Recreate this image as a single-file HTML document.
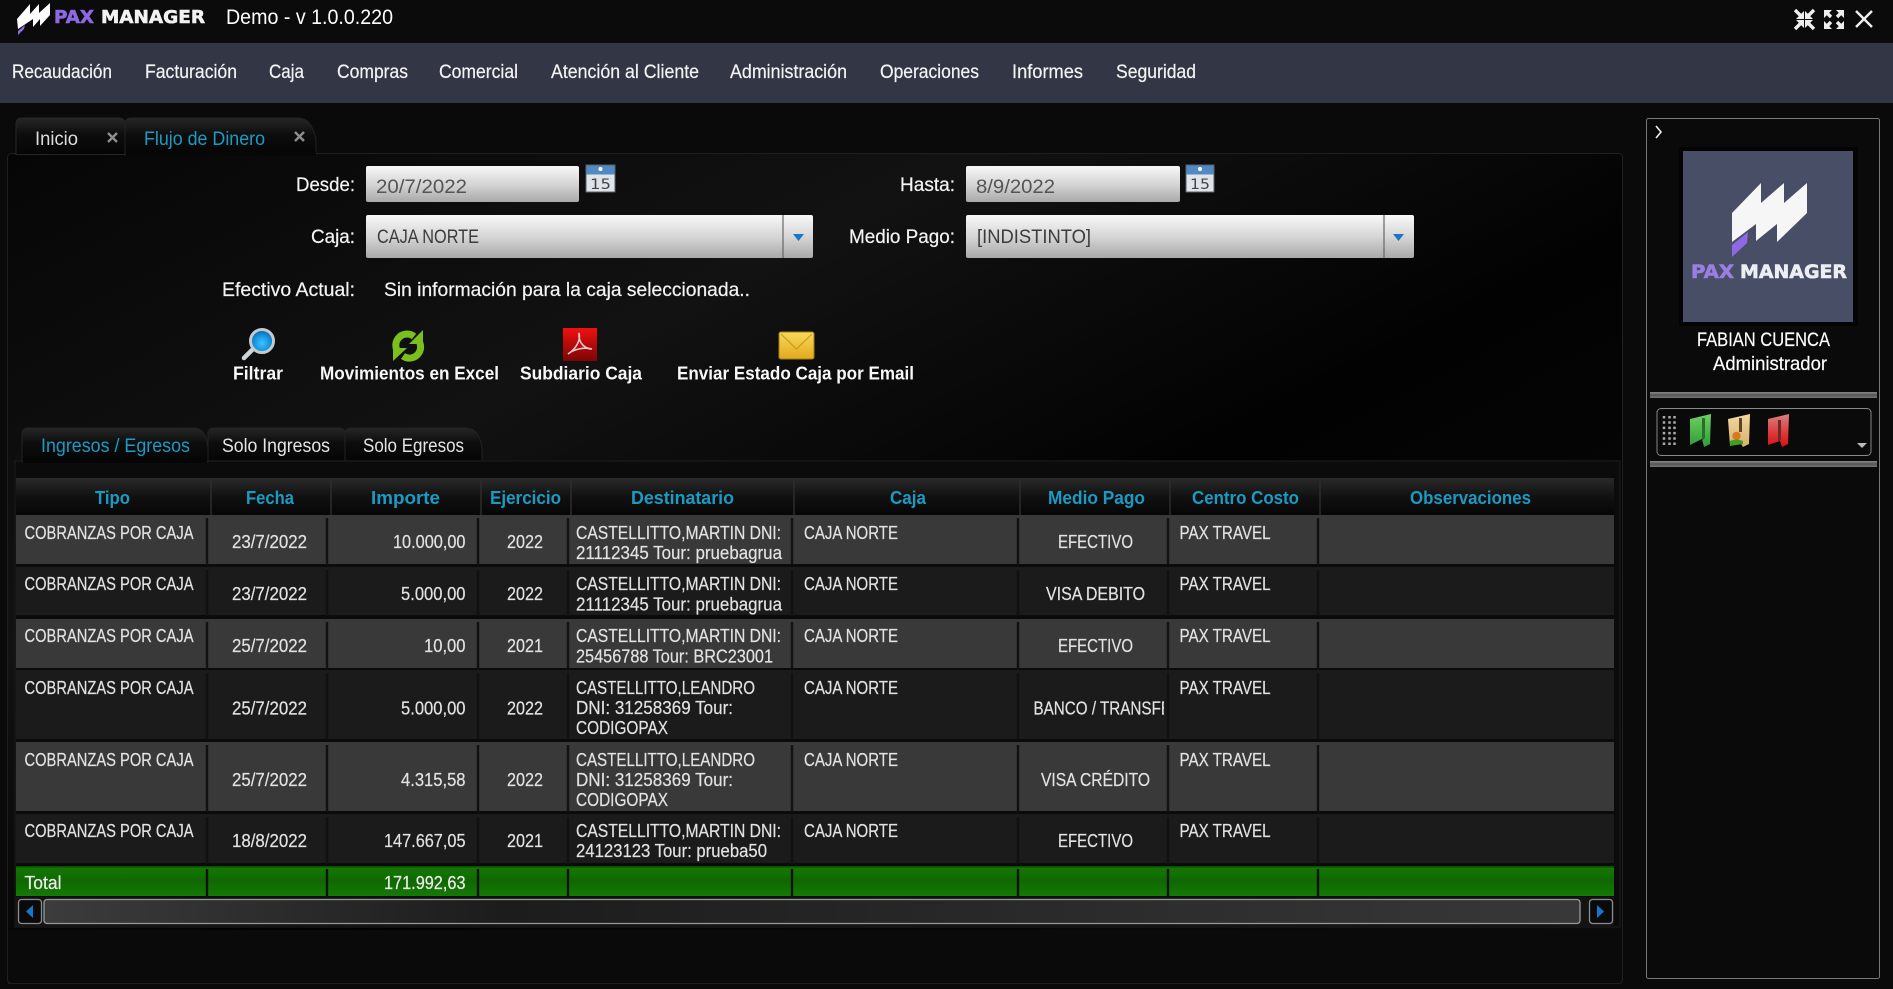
<!DOCTYPE html>
<html lang="es"><head><meta charset="utf-8"><title>Pax Manager</title>
<style>
html,body{margin:0;padding:0;width:1893px;height:989px;overflow:hidden;background:#0a0a0a}
svg.root{display:block;position:absolute;left:0;top:0;filter:blur(.35px)}
text{font-family:"Liberation Sans",sans-serif;font-size:19.5px;fill:#eee}
.m{fill:#f4f4f4;stroke:#f4f4f4;stroke-width:.2}
.d{font-size:18.5px;fill:#e2e2e2;stroke:#e2e2e2;stroke-width:.2;transform:translateY(.8px)}
.h{font-size:18px;font-weight:bold;fill:#1b9ac4;transform:translateY(.8px)}
.b{font-size:18px;font-weight:bold;fill:#f8f8f8}
.i{fill:#555}
.c{fill:#3c3c3c}
.a{fill:#1d9bc4}
.lg{font-family:"DejaVu Sans",sans-serif;font-weight:bold;stroke-width:.6}
</style></head><body>
<svg class="root" width="1893" height="989" viewBox="0 0 1893 989" xmlns="http://www.w3.org/2000/svg">
<defs>
<linearGradient id="inp" x1="0" y1="0" x2="0" y2="1"><stop offset="0" stop-color="#f8f8f8"/><stop offset=".5" stop-color="#d6d6d6"/><stop offset="1" stop-color="#a9a9a9"/></linearGradient>
<linearGradient id="hd" x1="0" y1="0" x2="0" y2="1"><stop offset="0" stop-color="#2a2a2a"/><stop offset=".5" stop-color="#111"/><stop offset="1" stop-color="#060606"/></linearGradient>
<linearGradient id="tab" x1="0" y1="0" x2="0" y2="1"><stop offset="0" stop-color="#262626"/><stop offset=".45" stop-color="#0d0d0d"/><stop offset="1" stop-color="#050505"/></linearGradient>
<linearGradient id="panel" x1="0" y1="0" x2="1" y2="1"><stop offset="0" stop-color="#060606"/><stop offset=".3" stop-color="#121212"/><stop offset=".55" stop-color="#020202"/><stop offset="1" stop-color="#0c0c0c"/></linearGradient>
<linearGradient id="tot" x1="0" y1="0" x2="0" y2="1"><stop offset="0" stop-color="#147a04"/><stop offset=".5" stop-color="#106802"/><stop offset="1" stop-color="#147a04"/></linearGradient>
<linearGradient id="thumb" x1="0" y1="0" x2="1" y2="0"><stop offset="0" stop-color="#3c3c3c"/><stop offset=".3" stop-color="#1c1c1c"/><stop offset="1" stop-color="#383838"/></linearGradient>
<linearGradient id="sep" x1="0" y1="0" x2="0" y2="1"><stop offset="0" stop-color="#8a8a8a"/><stop offset=".5" stop-color="#555"/><stop offset="1" stop-color="#777"/></linearGradient>
<radialGradient id="lens" cx=".5" cy=".6" r=".6"><stop offset="0" stop-color="#3fc4ff"/><stop offset=".6" stop-color="#1590dd"/><stop offset="1" stop-color="#0a5fa8"/></radialGradient>
<linearGradient id="pdf" x1="0" y1="0" x2="0" y2="1"><stop offset="0" stop-color="#f01010"/><stop offset="1" stop-color="#7c0505"/></linearGradient>
<linearGradient id="mail" x1="0" y1="0" x2="0" y2="1"><stop offset="0" stop-color="#f7da5c"/><stop offset="1" stop-color="#e2a91e"/></linearGradient>
<linearGradient id="fg" x1="0" y1="0" x2="0" y2="1"><stop offset="0" stop-color="#6fd064"/><stop offset="1" stop-color="#2e9c36"/></linearGradient>
<linearGradient id="ft" x1="0" y1="0" x2="0" y2="1"><stop offset="0" stop-color="#f0d9a0"/><stop offset="1" stop-color="#d8b06a"/></linearGradient>
<linearGradient id="fr" x1="0" y1="0" x2="0" y2="1"><stop offset="0" stop-color="#d98080"/><stop offset=".55" stop-color="#dd3c3c"/><stop offset="1" stop-color="#d80f0f"/></linearGradient>
</defs>

<!-- backgrounds -->
<rect width="1893" height="989" fill="#0a0a0a"/>
<rect width="1893" height="43" fill="#0b0b0b"/>
<rect y="43" width="1893" height="60" fill="#333645"/>

<!-- top logo -->
<path d="M17 19 L30 4 L30 14 L39 4 L39 13 L50 3 L50 15 L40 26 L40 19 L33 27 L33 19 L18 29 Z" fill="#fff"/>
<path d="M18 31 L25 25 L24 29 L18 35 Z" fill="#8d69e4"/>
<text class="lg" x="54" y="23" textLength="40" lengthAdjust="spacingAndGlyphs" style="font-size:18px;fill:#8d69e4;stroke:#8d69e4">PAX</text>
<text class="lg" x="101" y="23" textLength="104" lengthAdjust="spacingAndGlyphs" style="font-size:18px;fill:#f2f2f2;stroke:#f2f2f2">MANAGER</text>
<text x="226" y="24" textLength="167" lengthAdjust="spacingAndGlyphs" style="font-size:21.500px;fill:#fff">Demo - v 1.0.0.220</text>

<!-- window icons -->
<g stroke="#eee" stroke-width="3.400" fill="none">
<path d="M1795 10 L1802 17 M1814 10 L1807 17 M1795 29 L1802 22 M1814 29 L1807 22"/>
<path d="M1825 11 L1831 17 M1843 11 L1837 17 M1825 28 L1831 22 M1843 28 L1837 22"/>
<path d="M1856 11 L1872 27 M1872 11 L1856 27" stroke-width="2.400"/>
</g>
<g fill="#eee">
<path d="M1796 19 L1804 19 L1804 11 Z M1813 19 L1805 19 L1805 11 Z M1796 20 L1804 20 L1804 28 Z M1813 20 L1805 20 L1805 28 Z"/>
<path d="M1824 10 L1832 10 L1824 18 Z M1844 10 L1836 10 L1844 18 Z M1824 29 L1832 29 L1824 21 Z M1844 29 L1836 29 L1844 21 Z"/>
</g>

<!-- menu -->
<g>
<text class="m" x="12" y="78" textLength="100" lengthAdjust="spacingAndGlyphs">Recaudación</text>
<text class="m" x="145" y="78" textLength="92" lengthAdjust="spacingAndGlyphs">Facturación</text>
<text class="m" x="269" y="78" textLength="35" lengthAdjust="spacingAndGlyphs">Caja</text>
<text class="m" x="337" y="78" textLength="71" lengthAdjust="spacingAndGlyphs">Compras</text>
<text class="m" x="439" y="78" textLength="79" lengthAdjust="spacingAndGlyphs">Comercial</text>
<text class="m" x="551" y="78" textLength="148" lengthAdjust="spacingAndGlyphs">Atención al Cliente</text>
<text class="m" x="730" y="78" textLength="117" lengthAdjust="spacingAndGlyphs">Administración</text>
<text class="m" x="880" y="78" textLength="99" lengthAdjust="spacingAndGlyphs">Operaciones</text>
<text class="m" x="1012" y="78" textLength="71" lengthAdjust="spacingAndGlyphs">Informes</text>
<text class="m" x="1116" y="78" textLength="80" lengthAdjust="spacingAndGlyphs">Seguridad</text>
</g>

<!-- main panel -->
<rect x="7.500" y="153.500" width="1615" height="830" rx="4" fill="url(#panel)" stroke="#1f1f1f"/>
<rect x="8" y="930" width="1614" height="53" fill="#0a0a0a"/>
<path d="M8 983.500 H1618 Q1622.500 983.500 1622.500 979 V930" fill="none" stroke="#1f1f1f"/>
<path d="M7.500 930 V979 Q7.500 983.500 12 983.500" fill="none" stroke="#1f1f1f"/>

<!-- tabs -->
<path d="M16 154.500 V124 Q16 118 22 118 H118 Q125 118 125 124 V154.500 Z" fill="url(#tab)" stroke="#262626"/>
<path d="M125 155 V124 Q125 118 131 118 H298 Q312 118 316 140 V155 Z" fill="url(#tab)" stroke="#222"/>
<rect x="126" y="152" width="190" height="4" fill="#070707"/>
<text x="35" y="145" textLength="43" lengthAdjust="spacingAndGlyphs" style="fill:#ddd">Inicio</text>
<text class="a" x="144" y="145" textLength="121" lengthAdjust="spacingAndGlyphs">Flujo de Dinero</text>
<path d="M108 133 L117 142 M117 133 L108 142 M295 132 L304 141 M304 132 L295 141" stroke="#8e8e8e" stroke-width="2.400" fill="none"/>

<!-- form -->
<rect x="366" y="166" width="213" height="36" rx="2" fill="url(#inp)"/>
<rect x="966" y="166" width="214" height="36" rx="2" fill="url(#inp)"/>
<rect x="366" y="215" width="447" height="43" rx="2" fill="url(#inp)"/>
<rect x="966" y="215" width="448" height="43" rx="2" fill="url(#inp)"/>
<path d="M783 215 V258 M1384 215 V258" stroke="#666" stroke-width="1.200"/>
<path d="M793 234 H804 L798.500 241 Z M1393 234 H1404 L1398.500 241 Z" fill="#1976c8"/>

<g>
<rect x="586" y="165" width="29" height="27" fill="#dfe4ea" stroke="#5a6068"/>
<rect x="586.500" y="165.500" width="28" height="9" fill="#4f8ac4"/>
<circle cx="600.500" cy="169" r="2" fill="#fff"/>
<text x="590" y="189" textLength="21" lengthAdjust="spacingAndGlyphs" style="font-size:14px;font-family:'DejaVu Sans',sans-serif;fill:#444">15</text>
</g>
<g>
<rect x="1186" y="165" width="28" height="27" fill="#dfe4ea" stroke="#5a6068"/>
<rect x="1186.500" y="165.500" width="27" height="9" fill="#4f8ac4"/>
<circle cx="1200" cy="169" r="2" fill="#fff"/>
<text x="1190" y="189" textLength="20" lengthAdjust="spacingAndGlyphs" style="font-size:14px;font-family:'DejaVu Sans',sans-serif;fill:#444">15</text>
</g>

<text class="m" x="296" y="191" textLength="59" lengthAdjust="spacingAndGlyphs">Desde:</text>
<text class="i" x="376" y="193" textLength="91" lengthAdjust="spacingAndGlyphs">20/7/2022</text>
<text class="m" x="900" y="191" textLength="55" lengthAdjust="spacingAndGlyphs">Hasta:</text>
<text class="i" x="976" y="193" textLength="79" lengthAdjust="spacingAndGlyphs">8/9/2022</text>
<text class="m" x="311" y="243" textLength="44" lengthAdjust="spacingAndGlyphs">Caja:</text>
<text class="c" x="377" y="243" textLength="102" lengthAdjust="spacingAndGlyphs">CAJA NORTE</text>
<text class="m" x="849" y="243" textLength="106" lengthAdjust="spacingAndGlyphs">Medio Pago:</text>
<text class="c" x="977" y="243" textLength="114" lengthAdjust="spacingAndGlyphs">[INDISTINTO]</text>
<text class="m" x="222" y="296" textLength="133" lengthAdjust="spacingAndGlyphs">Efectivo Actual:</text>
<text class="m" x="384" y="296" textLength="366" lengthAdjust="spacingAndGlyphs">Sin información para la caja seleccionada..</text>

<!-- toolbar icons -->
<path d="M252 350 L244 358" stroke="#cfd4d8" stroke-width="4.500" stroke-linecap="round"/>
<circle cx="262" cy="341" r="11.500" fill="url(#lens)" stroke="#c4c9ce" stroke-width="3"/>
<g fill="none" stroke="#7bbf1f" stroke-width="7">
<path d="M400 354 A11 11 0 0 1 414 336.500"/>
<path d="M416 338 A11 11 0 0 1 403 356"/>
</g>
<path d="M423 330 L423 344 L409 344 Z M393 361 L393 348 L407 348 Z" fill="#7bbf1f"/>
<rect x="563" y="328" width="34" height="33" fill="url(#pdf)"/>
<path d="M568 354 C576 349 581 340 579 333 C578 344 586 349 592 349 C584 347 574 349 568 354 Z" fill="none" stroke="#f0c8c8" stroke-width="1.600"/>
<rect x="779" y="332" width="35" height="27" rx="2" fill="url(#mail)" stroke="#a57b10"/>
<path d="M781 334 L796.500 349 L812 334" fill="none" stroke="#c99a1a" stroke-width="1.200"/>

<text class="b" x="233" y="379.500" textLength="50" lengthAdjust="spacingAndGlyphs">Filtrar</text>
<text class="b" x="320" y="379.500" textLength="179" lengthAdjust="spacingAndGlyphs">Movimientos en Excel</text>
<text class="b" x="520" y="379.500" textLength="122" lengthAdjust="spacingAndGlyphs">Subdiario Caja</text>
<text class="b" x="677" y="379.500" textLength="237" lengthAdjust="spacingAndGlyphs">Enviar Estado Caja por Email</text>

<!-- sub tabs -->
<rect x="15" y="461" width="1605" height="466" fill="#0b0b0b" stroke="#1e1e1e"/>
<path d="M208 461 V434 Q208 428 214 428 H339 Q345 428 345 434 V461 Z" fill="url(#tab)" stroke="#222"/>
<path d="M345 461 V434 Q345 428 351 428 H466 Q480 428 482 450 V461 Z" fill="url(#tab)" stroke="#222"/>
<path d="M22 462 V434 Q22 428 28 428 H194 Q206 428 208 448 V462 Z" fill="url(#tab)" stroke="#222"/>
<rect x="23" y="459" width="184" height="4" fill="#060606"/>
<text class="a" x="41" y="452" textLength="149" lengthAdjust="spacingAndGlyphs">Ingresos / Egresos</text>
<text x="222" y="452" textLength="108" lengthAdjust="spacingAndGlyphs" style="fill:#e4e4e4">Solo Ingresos</text>
<text x="363" y="452" textLength="101" lengthAdjust="spacingAndGlyphs" style="fill:#e4e4e4">Solo Egresos</text>

<!-- header -->
<rect x="16" y="478" width="1598" height="37" fill="url(#hd)"/>
<path d="M211 478 V515 M331 478 V515 M481 478 V515 M571 478 V515 M794 478 V515 M1020 478 V515 M1170 478 V515 M1320 478 V515" stroke="#2c2c2c" stroke-width="1.500"/>
<text class="h" x="95" y="503" textLength="35" lengthAdjust="spacingAndGlyphs">Tipo</text>
<text class="h" x="246" y="503" textLength="48" lengthAdjust="spacingAndGlyphs">Fecha</text>
<text class="h" x="371" y="503" textLength="69" lengthAdjust="spacingAndGlyphs">Importe</text>
<text class="h" x="490" y="503" textLength="71" lengthAdjust="spacingAndGlyphs">Ejercicio</text>
<text class="h" x="631" y="503" textLength="103" lengthAdjust="spacingAndGlyphs">Destinatario</text>
<text class="h" x="890" y="503" textLength="36" lengthAdjust="spacingAndGlyphs">Caja</text>
<text class="h" x="1048" y="503" textLength="97" lengthAdjust="spacingAndGlyphs">Medio Pago</text>
<text class="h" x="1192" y="503" textLength="107" lengthAdjust="spacingAndGlyphs">Centro Costo</text>
<text class="h" x="1410" y="503" textLength="121" lengthAdjust="spacingAndGlyphs">Observaciones</text>

<!-- rows -->
<rect x="16" y="515" width="1598" height="49" fill="#393939"/>
<rect x="16" y="567" width="1598" height="48" fill="#1b1b1b"/>
<rect x="16" y="619" width="1598" height="49" fill="#393939"/>
<rect x="16" y="670" width="1598" height="69" fill="#1b1b1b"/>
<rect x="16" y="742" width="1598" height="69" fill="#393939"/>
<rect x="16" y="814" width="1598" height="49" fill="#1b1b1b"/>
<rect x="16" y="866" width="1598" height="30" fill="url(#tot)"/>
<rect x="16" y="866" width="1598" height="1.500" fill="#0d4d02"/>
<path d="M207 518 V565 M207 570 V616 M207 622 V669 M207 673 V740 M207 745 V812 M207 817 V864 M207 869 V897
M327 518 V565 M327 570 V616 M327 622 V669 M327 673 V740 M327 745 V812 M327 817 V864 M327 869 V897
M478 518 V565 M478 570 V616 M478 622 V669 M478 673 V740 M478 745 V812 M478 817 V864 M478 869 V897
M568 518 V565 M568 570 V616 M568 622 V669 M568 673 V740 M568 745 V812 M568 817 V864 M568 869 V897
M792 518 V565 M792 570 V616 M792 622 V669 M792 673 V740 M792 745 V812 M792 817 V864 M792 869 V897
M1018 518 V565 M1018 570 V616 M1018 622 V669 M1018 673 V740 M1018 745 V812 M1018 817 V864 M1018 869 V897
M1168 518 V565 M1168 570 V616 M1168 622 V669 M1168 673 V740 M1168 745 V812 M1168 817 V864 M1168 869 V897
M1318 518 V565 M1318 570 V616 M1318 622 V669 M1318 673 V740 M1318 745 V812 M1318 817 V864 M1318 869 V897" stroke="#111" stroke-width="2.400" fill="none"/>

<g>
<!-- r1 -->
<text class="d" x="24.500" y="538" textLength="169" lengthAdjust="spacingAndGlyphs">COBRANZAS POR CAJA</text>
<text class="d" x="232" y="547" textLength="75" lengthAdjust="spacingAndGlyphs">23/7/2022</text>
<text class="d" x="393" y="547" textLength="72.500" lengthAdjust="spacingAndGlyphs">10.000,00</text>
<text class="d" x="507" y="547" textLength="36" lengthAdjust="spacingAndGlyphs">2022</text>
<text class="d" x="576" y="538" textLength="205" lengthAdjust="spacingAndGlyphs">CASTELLITTO,MARTIN DNI:</text>
<text class="d" x="576" y="558" textLength="206" lengthAdjust="spacingAndGlyphs">21112345 Tour: pruebagrua</text>
<text class="d" x="804" y="538" textLength="94" lengthAdjust="spacingAndGlyphs">CAJA NORTE</text>
<text class="d" x="1058" y="547" textLength="75" lengthAdjust="spacingAndGlyphs">EFECTIVO</text>
<text class="d" x="1179.500" y="538" textLength="91" lengthAdjust="spacingAndGlyphs">PAX TRAVEL</text>
<!-- r2 -->
<text class="d" x="24.500" y="589" textLength="169" lengthAdjust="spacingAndGlyphs">COBRANZAS POR CAJA</text>
<text class="d" x="232" y="599" textLength="75" lengthAdjust="spacingAndGlyphs">23/7/2022</text>
<text class="d" x="401" y="599" textLength="64.500" lengthAdjust="spacingAndGlyphs">5.000,00</text>
<text class="d" x="507" y="599" textLength="36" lengthAdjust="spacingAndGlyphs">2022</text>
<text class="d" x="576" y="589" textLength="205" lengthAdjust="spacingAndGlyphs">CASTELLITTO,MARTIN DNI:</text>
<text class="d" x="576" y="609.500" textLength="206" lengthAdjust="spacingAndGlyphs">21112345 Tour: pruebagrua</text>
<text class="d" x="804" y="589" textLength="94" lengthAdjust="spacingAndGlyphs">CAJA NORTE</text>
<text class="d" x="1046" y="599" textLength="99" lengthAdjust="spacingAndGlyphs">VISA DEBITO</text>
<text class="d" x="1179.500" y="589" textLength="91" lengthAdjust="spacingAndGlyphs">PAX TRAVEL</text>
<!-- r3 -->
<text class="d" x="24.500" y="641" textLength="169" lengthAdjust="spacingAndGlyphs">COBRANZAS POR CAJA</text>
<text class="d" x="232" y="651" textLength="75" lengthAdjust="spacingAndGlyphs">25/7/2022</text>
<text class="d" x="424" y="651" textLength="41.500" lengthAdjust="spacingAndGlyphs">10,00</text>
<text class="d" x="507" y="651" textLength="36" lengthAdjust="spacingAndGlyphs">2021</text>
<text class="d" x="576" y="641" textLength="205" lengthAdjust="spacingAndGlyphs">CASTELLITTO,MARTIN DNI:</text>
<text class="d" x="576" y="661.500" textLength="197" lengthAdjust="spacingAndGlyphs">25456788 Tour: BRC23001</text>
<text class="d" x="804" y="641" textLength="94" lengthAdjust="spacingAndGlyphs">CAJA NORTE</text>
<text class="d" x="1058" y="651" textLength="75" lengthAdjust="spacingAndGlyphs">EFECTIVO</text>
<text class="d" x="1179.500" y="641" textLength="91" lengthAdjust="spacingAndGlyphs">PAX TRAVEL</text>
<!-- r4 -->
<text class="d" x="24.500" y="693" textLength="169" lengthAdjust="spacingAndGlyphs">COBRANZAS POR CAJA</text>
<text class="d" x="232" y="713.500" textLength="75" lengthAdjust="spacingAndGlyphs">25/7/2022</text>
<text class="d" x="401" y="713.500" textLength="64.500" lengthAdjust="spacingAndGlyphs">5.000,00</text>
<text class="d" x="507" y="713.500" textLength="36" lengthAdjust="spacingAndGlyphs">2022</text>
<text class="d" x="576" y="693" textLength="179" lengthAdjust="spacingAndGlyphs">CASTELLITTO,LEANDRO</text>
<text class="d" x="576" y="713" textLength="157" lengthAdjust="spacingAndGlyphs">DNI: 31258369 Tour:</text>
<text class="d" x="576" y="733" textLength="92" lengthAdjust="spacingAndGlyphs">CODIGOPAX</text>
<text class="d" x="804" y="693" textLength="94" lengthAdjust="spacingAndGlyphs">CAJA NORTE</text>
<svg x="1020" y="690" width="144" height="32" viewBox="1020 690 144 32"><text class="d" x="1033.500" y="713.500" textLength="195" lengthAdjust="spacingAndGlyphs">BANCO / TRANSFERENCIA</text></svg>
<text class="d" x="1179.500" y="693" textLength="91" lengthAdjust="spacingAndGlyphs">PAX TRAVEL</text>
<!-- r5 -->
<text class="d" x="24.500" y="765" textLength="169" lengthAdjust="spacingAndGlyphs">COBRANZAS POR CAJA</text>
<text class="d" x="232" y="785" textLength="75" lengthAdjust="spacingAndGlyphs">25/7/2022</text>
<text class="d" x="401" y="785" textLength="64.500" lengthAdjust="spacingAndGlyphs">4.315,58</text>
<text class="d" x="507" y="785" textLength="36" lengthAdjust="spacingAndGlyphs">2022</text>
<text class="d" x="576" y="765" textLength="179" lengthAdjust="spacingAndGlyphs">CASTELLITTO,LEANDRO</text>
<text class="d" x="576" y="785" textLength="157" lengthAdjust="spacingAndGlyphs">DNI: 31258369 Tour:</text>
<text class="d" x="576" y="805" textLength="92" lengthAdjust="spacingAndGlyphs">CODIGOPAX</text>
<text class="d" x="804" y="765" textLength="94" lengthAdjust="spacingAndGlyphs">CAJA NORTE</text>
<text class="d" x="1041" y="785" textLength="109" lengthAdjust="spacingAndGlyphs">VISA CRÉDITO</text>
<text class="d" x="1179.500" y="765" textLength="91" lengthAdjust="spacingAndGlyphs">PAX TRAVEL</text>
<!-- r6 -->
<text class="d" x="24.500" y="836" textLength="169" lengthAdjust="spacingAndGlyphs">COBRANZAS POR CAJA</text>
<text class="d" x="232" y="846" textLength="75" lengthAdjust="spacingAndGlyphs">18/8/2022</text>
<text class="d" x="384" y="846" textLength="81.500" lengthAdjust="spacingAndGlyphs">147.667,05</text>
<text class="d" x="507" y="846" textLength="36" lengthAdjust="spacingAndGlyphs">2021</text>
<text class="d" x="576" y="836" textLength="205" lengthAdjust="spacingAndGlyphs">CASTELLITTO,MARTIN DNI:</text>
<text class="d" x="576" y="856" textLength="191" lengthAdjust="spacingAndGlyphs">24123123 Tour: prueba50</text>
<text class="d" x="804" y="836" textLength="94" lengthAdjust="spacingAndGlyphs">CAJA NORTE</text>
<text class="d" x="1058" y="846" textLength="75" lengthAdjust="spacingAndGlyphs">EFECTIVO</text>
<text class="d" x="1179.500" y="836" textLength="91" lengthAdjust="spacingAndGlyphs">PAX TRAVEL</text>
<!-- total -->
<text class="d" x="24.500" y="888" textLength="37" lengthAdjust="spacingAndGlyphs" style="fill:#eee;stroke:#eee">Total</text>
<text class="d" x="384" y="888" textLength="81.500" lengthAdjust="spacingAndGlyphs" style="fill:#eee;stroke:#eee">171.992,63</text>
</g>

<!-- scrollbar -->
<rect x="16" y="897" width="1598" height="29" fill="#141414"/>
<rect x="18.500" y="899.500" width="23" height="24" rx="3" fill="#0a0a0a" stroke="#8c8c8c" stroke-width="1.300"/>
<path d="M33 905 V918 L26 911.500 Z" fill="#1976c8"/>
<rect x="44" y="899.500" width="1536" height="24" rx="3" fill="url(#thumb)" stroke="#999" stroke-width="1.300"/>
<rect x="1589.500" y="899.500" width="23" height="24" rx="3" fill="#0a0a0a" stroke="#8c8c8c" stroke-width="1.300"/>
<path d="M1597 905 V918 L1604 911.500 Z" fill="#1976c8"/>

<!-- side panel -->
<rect x="1646.500" y="118.500" width="233" height="860" rx="2" fill="#0a0a0a" stroke="#777"/>
<path d="M1656 126 L1661 132 L1656 138" fill="none" stroke="#eee" stroke-width="1.600"/>
<rect x="1679" y="147" width="179" height="179" fill="#040404"/>
<rect x="1683" y="151" width="170" height="171" fill="#484e66"/>
<path d="M1732 213 L1761 183 L1761 203 L1784 183 L1784 203 L1807 183 L1807 213 L1777 242 L1777 224 L1756 241 L1756 224 L1732 242 Z" fill="#f6f6f6"/>
<path d="M1732 245 L1748 232 L1747 243 L1732 257 Z" fill="#8d69e4"/>
<text class="lg" x="1691" y="278" textLength="43" lengthAdjust="spacingAndGlyphs" style="font-size:19px;fill:#9a7fe0;stroke:#9a7fe0">PAX</text>
<text class="lg" x="1740" y="278" textLength="107" lengthAdjust="spacingAndGlyphs" style="font-size:19px;fill:#eceef2;stroke:#eceef2">MANAGER</text>
<text class="m" x="1697" y="346" textLength="133" lengthAdjust="spacingAndGlyphs" style="fill:#fff">FABIAN CUENCA</text>
<text class="m" x="1713" y="370" textLength="114" lengthAdjust="spacingAndGlyphs" style="fill:#fff">Administrador</text>

<rect x="1650" y="392" width="227" height="6" fill="url(#sep)"/>
<rect x="1650" y="461" width="227" height="6" fill="url(#sep)"/>
<rect x="1657" y="408.500" width="214" height="47" rx="4" fill="#0a0a0a" stroke="#888"/>
<path d="M1664 416 V446 M1669.500 416 V446 M1674.500 416 V446" stroke="#aaa" stroke-width="2.500" stroke-dasharray="2.500 2.800" fill="none"/>
<path d="M1690 419 L1711 414 L1710 444 L1704 447 L1702 439 L1690 445 Z" fill="url(#fg)"/>
<path d="M1702 418 H1705 V438 L1702 441 Z" fill="#2a6e2a"/>
<path d="M1728 419 L1750 414 L1749 444 L1743 447 L1740 442 L1730 446 Z" fill="url(#ft)"/>
<path d="M1739 418 H1742 V432 H1739 Z" fill="#5c4520"/>
<circle cx="1736.500" cy="436" r="4.200" fill="#d9791f"/>
<path d="M1730 446 L1730 441 Q1736.500 438 1743 441 V444 Z" fill="#3f9e28"/>
<path d="M1768 419 L1789 414 L1788 444 L1782 447 L1780 441 L1768 445 Z" fill="url(#fr)"/>
<path d="M1778 420 H1781 V440 L1778 442 Z" fill="#6a2a2a"/>
<path d="M1857 443 H1867 L1862 448 Z" fill="#bbb"/>
</svg>
</body></html>
